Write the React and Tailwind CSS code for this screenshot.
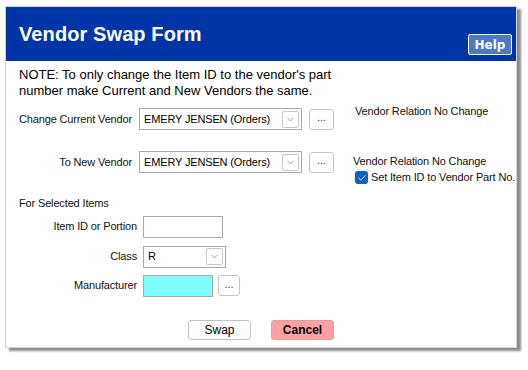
import { Check, ChevronDown } from 'lucide-react'

const font = { fontFamily: '"Liberation Sans", Arial, sans-serif' }

function Select({ value, width }) {
  return (
    <div className={`${width} h-[22px] border border-[#a9a9a9] bg-white flex items-center justify-between pl-[4px] pr-[2px]`}>
      <span className="text-[11px] tracking-[-0.15px] text-black whitespace-nowrap">{value}</span>
      <span className="w-[17px] h-[17px] border border-[#c8c8c8] rounded-[2px] flex items-center justify-center">
        <ChevronDown size={11} strokeWidth={1.2} className="text-[#555]" />
      </span>
    </div>
  )
}

function Dots({ className = '' }) {
  return (
    <button className={`h-[21px] border border-[#c6c6c6] rounded-[3px] bg-white text-[11px] text-[#333] leading-none pb-[3px] ${className}`}>
      ...
    </button>
  )
}

const label = 'text-[11px] tracking-[-0.15px] text-[#111] whitespace-nowrap'

export default function App() {
  return (
    <div className="w-[528px] h-[370px] bg-white overflow-hidden" style={font}>
      <div className="ml-[5px] mt-[6px] w-[512px] h-[342px] border border-[#d4d4d4] bg-white shadow-[4px_3px_2px_rgba(0,0,0,0.45)] flex flex-col">
        <div className="h-[54px] bg-[#0035a8] flex items-start justify-between pl-[13px] pr-[4px]">
          <h1 className="text-white font-bold text-[20px] mt-[12px] tracking-[0.1px]">Vendor Swap Form</h1>
          <button
            className="mt-[27px] w-[44px] h-[21px] bg-[#4b78c9] border border-white rounded-[2px] text-white font-bold text-[12px] leading-none"
            style={{ fontFamily: '"DejaVu Sans", Verdana, sans-serif' }}
          >
            Help
          </button>
        </div>

        <div className="pl-[13px] pt-[6px] flex-1 flex flex-col">
          <p className="text-[13px] leading-[16px] text-black">
            NOTE: To only change the Item ID to the vendor's part<br />
            number make Current and New Vendors the same.
          </p>

          <div className="flex items-start mt-[4px]">
            <div className="flex items-center mt-[5px]">
              <div className={`w-[120px] ${label}`}>Change Current Vendor</div>
              <Select value="EMERY JENSEN (Orders)" width="w-[163px]" />
              <Dots className="ml-[7px] w-[25px]" />
            </div>
            <div className={`ml-[21px] ${label}`}>Vendor Relation No Change</div>
          </div>

          <div className="flex items-start mt-[21px]">
            <div className="flex items-center">
              <div className={`w-[120px] text-right pr-[7px] ${label}`}>To New Vendor</div>
              <Select value="EMERY JENSEN (Orders)" width="w-[163px]" />
              <Dots className="ml-[7px] w-[25px]" />
            </div>
            <div className="ml-[19px] mt-[3px] flex flex-col">
              <div className={`leading-[15px] ${label}`}>Vendor Relation No Change</div>
              <div className="flex items-center ml-[2px] mt-[1px]">
                <span className="w-[13px] h-[13px] rounded-[3px] bg-[#0a64c8] flex items-center justify-center">
                  <Check size={10} strokeWidth={2} className="text-white" />
                </span>
                <span className={`ml-[3px] leading-[15px] ${label}`}>Set Item ID to Vendor Part No.</span>
              </div>
            </div>
          </div>

          <div className={`mt-[10px] ${label}`}>For Selected Items</div>

          <div className="flex items-center mt-[4px]">
            <div className={`w-[124px] text-right pr-[6px] ${label}`}>Item ID or Portion</div>
            <div className="w-[80px] h-[22px] border border-[#a9a9a9] bg-white" />
          </div>

          <div className="flex items-center mt-[8px]">
            <div className={`w-[124px] text-right pr-[6px] ${label}`}>Class</div>
            <Select value="R" width="w-[83px]" />
          </div>

          <div className="flex items-center mt-[7px]">
            <div className={`w-[124px] text-right pr-[6px] ${label}`}>Manufacturer</div>
            <div className="w-[70px] h-[22px] border border-[#a9a9a9] bg-[#7ffcff]" />
            <Dots className="ml-[5px] w-[22px]" />
          </div>

          <div className="flex items-center mt-[23px] ml-[169px] gap-[20px]">
            <button className="w-[63px] h-[20px] border border-[#c4c4c4] rounded-[3px] bg-[#fdfdfd] text-[12px] text-black leading-none">
              Swap
            </button>
            <button className="w-[63px] h-[20px] border border-[#d9a0a0] rounded-[3px] bg-[#ffa0a2] text-[12px] font-bold text-black leading-none">
              Cancel
            </button>
          </div>
        </div>
      </div>
    </div>
  )
}
